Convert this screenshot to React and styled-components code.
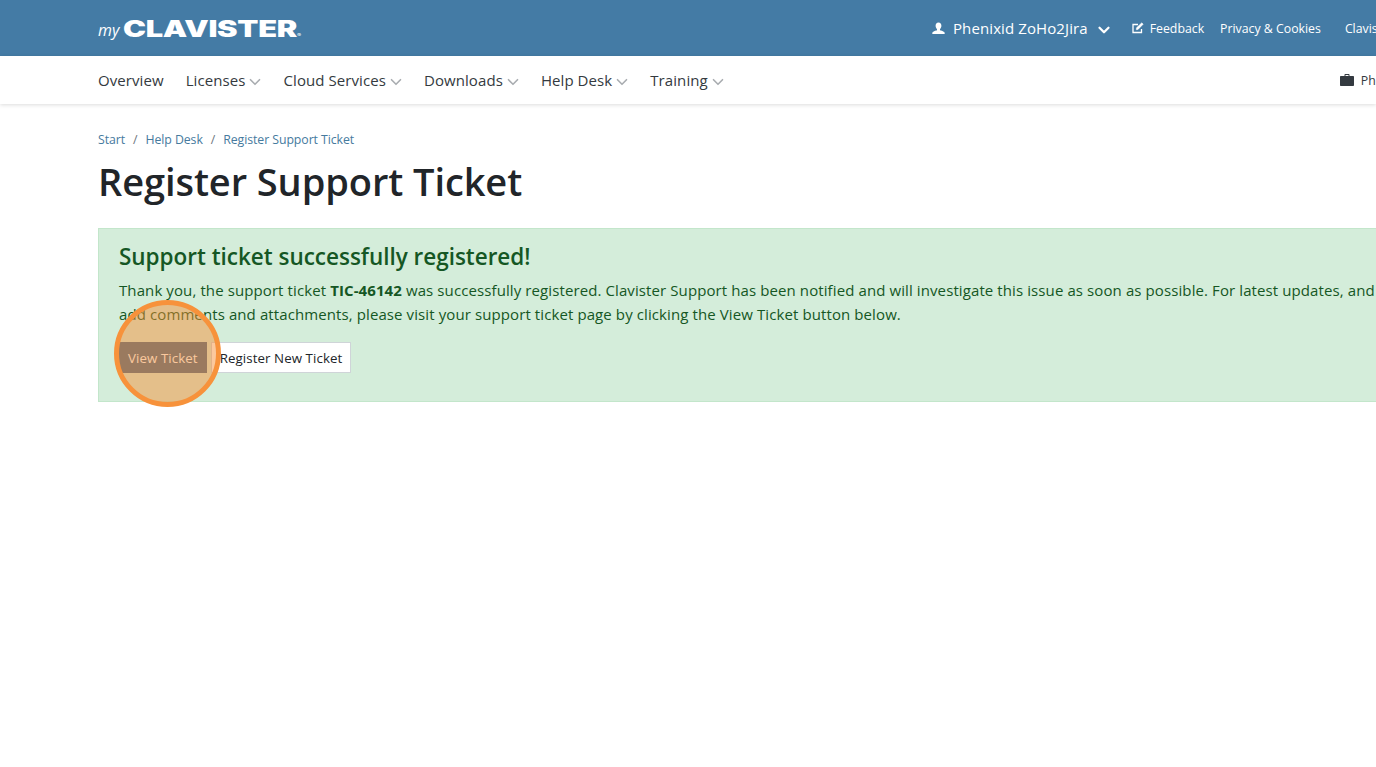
import React from 'react';
import styled, { createGlobalStyle } from 'styled-components';
import { ChevronDown } from 'lucide-react';

const GlobalStyle = createGlobalStyle`
  html, body {
    margin: 0;
    height: 100%;
    overflow: hidden;
    background: #fff;
  }
  body {
    font-family: "Open Sans", "Noto Sans", sans-serif;
    color: #212529;
  }
`;

const Page = styled.div`
  width: 1376px;
  height: 767px;
  overflow: hidden;
  position: relative;
`;

const TopBar = styled.header`
  height: 56px;
  background: #447ba5;
  display: flex;
  align-items: center;
  padding-left: 98px;
  color: #fff;
  white-space: nowrap;
`;

const Logo = styled.div`
  display: flex;
  align-items: baseline;
  width: 204px;
  flex: none;
  margin-top: 7px;
`;

const LogoMy = styled.span`
  font-size: 16px;
  font-style: italic;
  margin-right: 4px;
`;

const LogoWord = styled.span`
  font-family: "Inter", sans-serif;
  font-weight: 900;
  font-size: 20px;
  line-height: 20px;
  letter-spacing: -0.2px;
  display: inline-block;
  transform: translateY(2px) scale(1.54, 1.12);
  transform-origin: left bottom;
`;

const LogoMark = styled.span`
  font-size: 4px;
  font-weight: 400;
  letter-spacing: 0;
`;

const TopRight = styled.div`
  display: flex;
  align-items: center;
  margin-left: 630px;
  flex: none;
`;

const UserLink = styled.span`
  display: flex;
  align-items: center;
  font-size: 15px;
  letter-spacing: 0.1px;
  margin-right: 19px;
`;

const UserChevron = styled(ChevronDown)`
  width: 18px;
  height: 18px;
  margin: 3px 0 0 7px;
  stroke-width: 3;
`;

const TopLink = styled.span`
  display: flex;
  align-items: center;
  font-size: 12.3px;
  margin-right: ${p => p.$gap}px;
`;

const NavBar = styled.nav`
  height: 48px;
  background: #fff;
  box-shadow: 0 1px 4px rgba(0, 0, 0, 0.14);
  display: flex;
  align-items: center;
  padding-left: 98px;
  white-space: nowrap;
  position: relative;
`;

const NavItem = styled.span`
  display: flex;
  align-items: center;
  gap: 4px;
  font-size: 15px;
  letter-spacing: 0.08px;
  color: #343a40;
  margin-right: 22px;
`;

const Chevron = styled(ChevronDown)`
  width: 18px;
  height: 18px;
  margin: 3px -3px 0;
  color: #a9adb1;
  stroke-width: 2.2;
`;

const Account = styled.span`
  display: flex;
  align-items: center;
  gap: 7px;
  font-size: 12.3px;
  color: #343a40;
  margin-left: 594px;
`;

const Main = styled.main`
  padding: 26px 0 0 98px;
  width: 1500px;
`;

const Crumbs = styled.div`
  display: flex;
  align-items: center;
  font-size: 12.3px;
  letter-spacing: -0.07px;
  line-height: 20px;
  color: #467a9e;
`;

const Sep = styled.span`
  color: #6c757d;
  margin: 0 8px;
`;

const Title = styled.h1`
  margin: 8px 0 24px;
  font-size: 38px;
  font-weight: 600;
  line-height: 46px;
  letter-spacing: -0.08px;
  color: #212529;
`;

const Alert = styled.section`
  box-sizing: border-box;
  width: 1400px;
  height: 174px;
  background: #d4edda;
  border: 1px solid #c3e6cb;
  padding: 12px 20px;
  color: #155724;
`;

const AlertTitle = styled.h4`
  margin: 0 0 5px;
  font-size: 22.5px;
  font-weight: 600;
  line-height: 32px;
  letter-spacing: -0.02px;
`;

const AlertText = styled.p`
  margin: 0 0 16px;
  font-size: 15px;
  line-height: 24px;
  letter-spacing: 0.1px;
  white-space: nowrap;

  strong {
    font-weight: 700;
  }
`;

const Actions = styled.div`
  display: flex;
  gap: 4px;
`;

const Button = styled.button`
  height: 31px;
  padding: 0 8px;
  border: 1px solid ${p => (p.$primary ? '#466a88' : '#cfd4d8')};
  background: ${p => (p.$primary ? '#466a88' : '#fff')};
  color: ${p => (p.$primary ? '#fff' : '#212529')};
  font-family: inherit;
  font-size: 13.3px;
  letter-spacing: 0.08px;
  border-radius: 0;
`;

const Spotlight = styled.div`
  position: absolute;
  left: 114px;
  top: 300px;
  width: 107px;
  height: 107px;
  box-sizing: border-box;
  border-radius: 50%;
  border: 5px solid #f7923b;
  background: rgba(247, 140, 50, 0.48);
`;

const UserIcon = () => (
  <svg width="13" height="13" viewBox="0 0 13 13" fill="#fff" style={{ marginRight: 8 }}>
    <path d="M6.5 0.5c1.9 0 2.9 1.4 2.9 3.2 0 1.3-.6 2.6-1.4 3.2v1c0 .5 3.2 1 4.3 2.2.4.5.4 1.4.4 1.9H.3c0-.5 0-1.4.4-1.9C1.800 8.900 5 8.400 5 7.900v-1C4.200 6.300 3.600 5 3.600 3.700 3.600 1.900 4.600.5 6.500.5z" />
  </svg>
);

const EditIcon = () => (
  <svg width="12" height="12" viewBox="0 0 12 12" fill="none" stroke="#fff" style={{ marginRight: 6 }}>
    <path d="M9.500 7v3.500h-8.500v-8h5" strokeWidth="1.300" />
    <path d="M4.500 5.800 9.800 0.800 11.200 2.200 6 7.500 4.300 7.700z" fill="#fff" strokeWidth="0.500" />
  </svg>
);

const BriefcaseIcon = () => (
  <svg width="14" height="12" viewBox="0 0 14 12" fill="#343a40">
    <path d="M4.500 2V.8C4.500.4 4.800 0 5.200 0h3.600c.4 0 .7.4.700.8V2H13c.6 0 1 .4 1 1v8c0 .6-.4 1-1 1H1c-.6 0-1-.4-1-1V3c0-.6.4-1 1-1zm1-1v1h3V1z" fillRule="evenodd" />
  </svg>
);

const navItems = ['Licenses', 'Cloud Services', 'Downloads', 'Help Desk', 'Training'];

export default function App() {
  return (
    <Page>
      <GlobalStyle />
      <TopBar>
        <Logo>
          <LogoMy>my</LogoMy>
          <LogoWord>
            CLAVISTER
            <LogoMark>®</LogoMark>
          </LogoWord>
        </Logo>
        <TopRight>
          <UserLink>
            <UserIcon />
            Phenixid ZoHo2Jira
            <UserChevron />
          </UserLink>
          <TopLink $gap={16}>
            <EditIcon />
            Feedback
          </TopLink>
          <TopLink $gap={24}>Privacy &amp; Cookies</TopLink>
          <TopLink $gap={0}>Clavister.com</TopLink>
        </TopRight>
      </TopBar>
      <NavBar>
        <NavItem>Overview</NavItem>
        {navItems.map(item => (
          <NavItem key={item}>
            {item}
            <Chevron />
          </NavItem>
        ))}
        <Account>
          <BriefcaseIcon />
          Phenixid
        </Account>
      </NavBar>
      <Main>
        <Crumbs>
          Start
          <Sep>/</Sep>
          Help Desk
          <Sep>/</Sep>
          Register Support Ticket
        </Crumbs>
        <Title>Register Support Ticket</Title>
        <Alert>
          <AlertTitle>Support ticket successfully registered!</AlertTitle>
          <AlertText>
            Thank you, the support ticket <strong>TIC-46142</strong> was successfully registered. Clavister Support has been notified and will investigate this issue as soon as possible. For latest updates, and to
            <br />
            add comments and attachments, please visit your support ticket page by clicking the View Ticket button below.
          </AlertText>
          <Actions>
            <Button $primary>View Ticket</Button>
            <Button>Register New Ticket</Button>
          </Actions>
        </Alert>
      </Main>
      <Spotlight />
    </Page>
  );
}
